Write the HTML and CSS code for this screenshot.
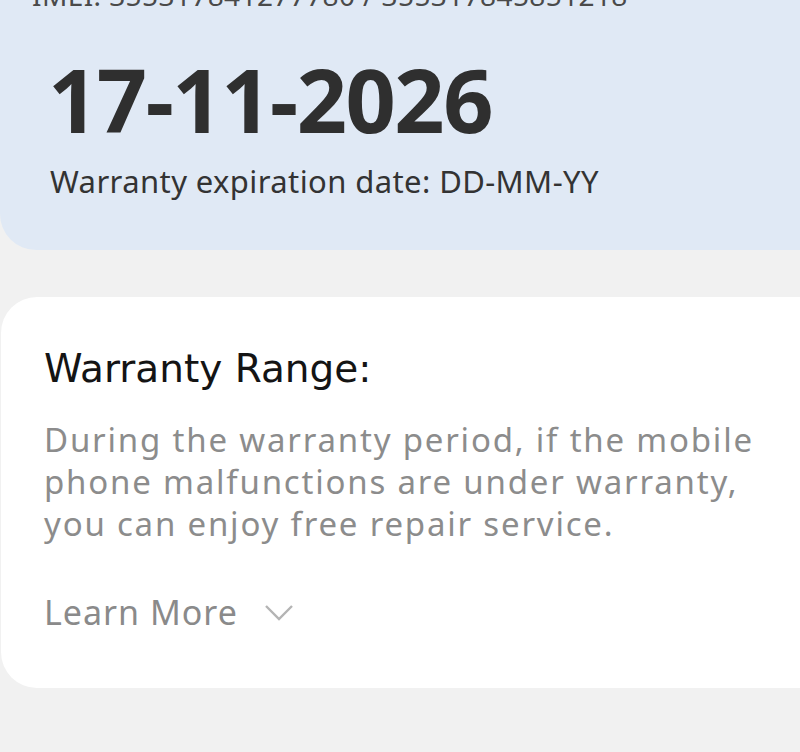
FILE: index.html
```html
<!DOCTYPE html>
<html lang="en">

<head>
  <meta charset="UTF-8">
  <meta name="viewport" content="width=device-width, initial-scale=1.0">
  <title>Warranty</title>
  <link rel="stylesheet" href="styles.css">
</head>

<body>
  <div class="expiry-card">
    <p class="imei">IMEI: 355317841277780 / 355317845851218</p>
    <h1 class="expiry-date">17-11-2026</h1>
    <p class="expiry-label">Warranty expiration date: DD-MM-YY</p>
  </div>

  <div class="range-card">
    <h2>Warranty Range:</h2>
    <p class="range-text">During the warranty period, if the mobile phone malfunctions are under warranty, you can enjoy free repair service.</p>
    <div class="learn-more">
      <span>Learn More</span>
      <svg width="30" height="18" viewBox="0 0 30 18">
        <polyline points="2,3 15,16 28,3" fill="none" stroke="#b4b4b4" stroke-width="2.4" />
      </svg>
    </div>
  </div>
</body>

</html>
```

FILE: styles.css
```css
body {
  margin: 0;
  height: 752px;
  overflow: hidden;
  background-color: #f1f1f1;
  font-family: "Noto Sans", sans-serif;
}

/* Top card with the date, scrolled so the IMEI line is half hidden */
.expiry-card {
  background-color: #e0e9f5;
  border-radius: 0 0 0 36px;
  padding: 0 0 49px 48px;
  margin-top: -25px;
}

.imei {
  margin: 0 0 0 -16px;
  font-size: 28px;
  line-height: 40px;
  letter-spacing: 0.4px;
  color: #4a4a4a;
}

.expiry-date {
  margin: 29px 0 0;
  font-size: 88px;
  font-weight: 700;
  line-height: 110px;
  letter-spacing: -1.5px;
  color: #2f2f2f;
}

.expiry-label {
  margin: 7px 0 0 2px;
  font-size: 31px;
  line-height: 40px;
  letter-spacing: 0.4px;
  color: #333;
}

/* White card with the range */
.range-card {
  margin: 47px 0 0 1px;
  background-color: #fff;
  border-radius: 36px 0 0 36px;
  padding: 44px 0 55px 43px;
}

.range-card h2 {
  margin: 0;
  font-family: "DejaVu Sans", sans-serif;
  font-size: 39px;
  font-weight: 400;
  line-height: 56px;
  color: #141414;
}

.range-text {
  margin: 22px 0 0;
  max-width: 740px;
  font-size: 33px;
  line-height: 42px;
  letter-spacing: 1.8px;
  color: #8c8c8c;
}

.learn-more {
  display: flex;
  align-items: center;
  gap: 26px;
  margin-top: 46px;
  font-size: 34px;
  line-height: 42px;
  letter-spacing: 1px;
  color: #8a8a8a;
}
```
